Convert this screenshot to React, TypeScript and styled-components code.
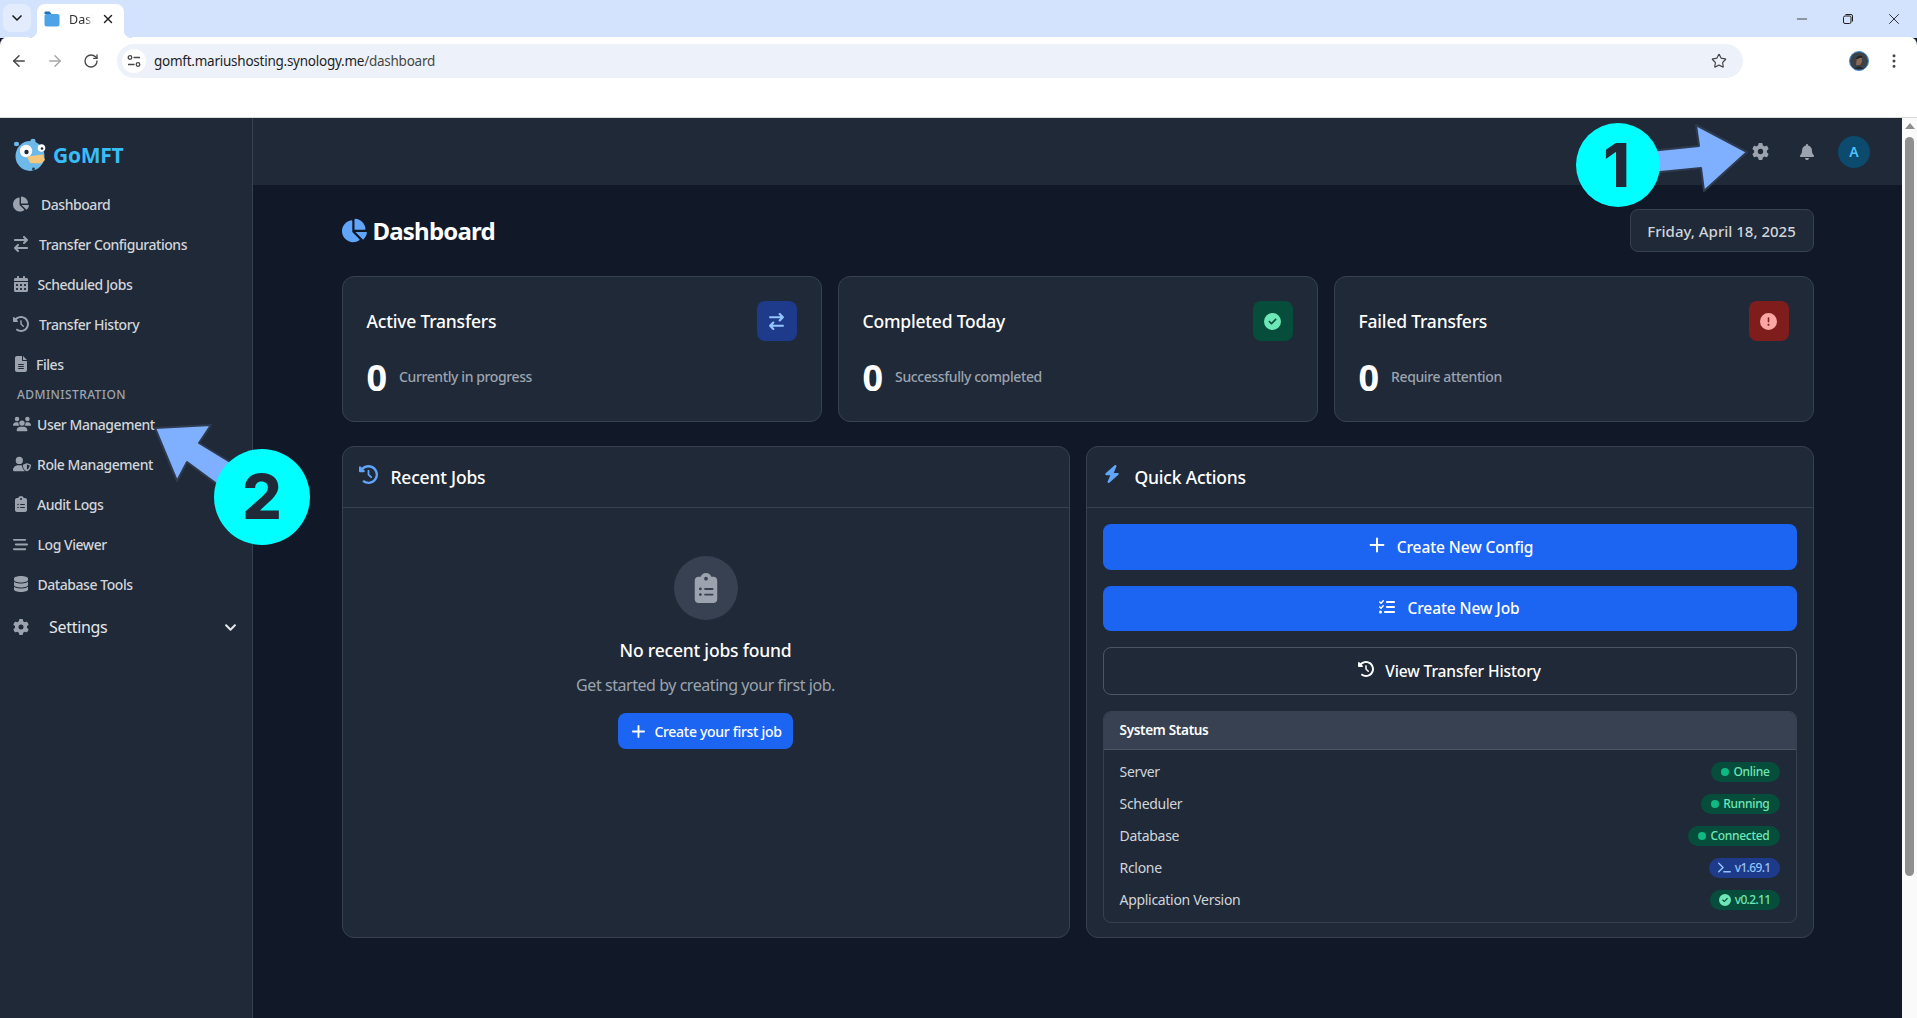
import React from 'react'

import { ArrowLeft, ArrowRight, ChevronDown, EllipsisVertical, Minus, Plus, RotateCw, Star, X } from 'lucide-react'
import { FaChartPie, FaChevronDown } from 'react-icons/fa'
import {
  FaArrowRightArrowLeft,
  FaBarsStaggered,
  FaBell,
  FaBolt,
  FaCalendarDays,
  FaCircleCheck,
  FaCircleExclamation,
  FaClipboardList,
  FaClockRotateLeft,
  FaDatabase,
  FaFileLines,
  FaGear,
  FaListCheck,
  FaTerminal,
  FaUsers,
  FaUserShield,
} from 'react-icons/fa6'
import styled, { createGlobalStyle } from 'styled-components'

const GlobalStyle = createGlobalStyle`
  html, body {
    margin: 0;
    padding: 0;
    height: 100%;
    overflow: hidden;
    background: #111827;
  }
  * {
    box-sizing: border-box;
  }
  body {
    font-family: "Noto Sans", "Open Sans", "Liberation Sans", sans-serif;
  }
`

const Page = styled.div`
  position: relative;
  width: 1917px;
  height: 1018px;
  overflow: hidden;
  display: flex;
  flex-direction: column;
`

/* browser chrome */
const TabStrip = styled.div`
  height: 38px;
  background: #d3e3fd;
  display: flex;
  align-items: flex-end;
  padding-left: 3px;
  color: #1f1f1f;
`

const TabMenu = styled.div`
  width: 28px;
  height: 28px;
  margin-bottom: 6px;
  border-radius: 8px;
  background: #e2ecfd;
  display: flex;
  align-items: center;
  justify-content: center;
`

const Tab = styled.div`
  position: relative;
  width: 87px;
  height: 34px;
  margin-left: 6px;
  padding: 0 8px 4px 7px;
  background: #fff;
  border-radius: 8px 8px 0 0;
  display: flex;
  align-items: center;
  font-size: 12.5px;
  &::before,
  &::after {
    content: '';
    position: absolute;
    bottom: 0;
    width: 8px;
    height: 8px;
  }
  &::before {
    left: -8px;
    background: radial-gradient(circle at 0 0, #d3e3fd 8px, #fff 8.5px);
  }
  &::after {
    right: -8px;
    background: radial-gradient(circle at 100% 0, #d3e3fd 8px, #fff 8.5px);
  }
`

const TabTitle = styled.span`
  margin-left: 9px;
  width: 24px;
  overflow: hidden;
  white-space: nowrap;
  color: #333;
  mask-image: linear-gradient(to right, #000 70%, transparent);
`

const TabClose = styled.span`
  margin-left: auto;
  margin-right: 1px;
  display: flex;
`

const WindowControls = styled.div`
  margin-left: auto;
  height: 38px;
  display: flex;
  align-items: center;
`

const WindowButton = styled.span`
  width: 46px;
  display: flex;
  justify-content: center;
`

const Toolbar = styled.div`
  height: 81px;
  flex: none;
  background: #fff;
  border-radius: 8px 8px 0 0;
  margin-top: -1px;
  border-bottom: 1px solid #d9d9d9;
  display: flex;
  align-items: flex-start;
  padding: 7px 0 0 1px;
  color: #474747;
`

const NavButton = styled.div<{ $off?: boolean }>`
  width: 36px;
  height: 34px;
  display: flex;
  align-items: center;
  justify-content: center;
  color: ${p => (p.$off ? '#a8a8a8' : '#474747')};
`

const AddressBar = styled.div`
  margin-left: 8px;
  width: 1626px;
  flex: none;
  height: 34px;
  border-radius: 17px;
  background: #edf2fa;
  display: flex;
  align-items: center;
  padding: 0 16px 0 5px;
`

const SiteBadge = styled.div`
  width: 24px;
  height: 24px;
  border-radius: 50%;
  background: #fff;
  display: flex;
  align-items: center;
  justify-content: center;
`

const UrlText = styled.span`
  margin-left: 8px;
  font-size: 13.5px;
  letter-spacing: -0.25px;
  color: #1f1f1f;
  span {
    color: #474747;
  }
`

const StarSlot = styled.span`
  margin-left: auto;
  display: flex;
`

const Profile = styled.div`
  width: 20px;
  height: 20px;
  flex: none;
  margin: 7px 0 0 106px;
  display: flex;
`

const MenuDots = styled.div`
  margin: 8px 0 0 16px;
  display: flex;
`

/* app */
const AppBody = styled.div`
  flex: 1;
  display: flex;
  min-height: 0;
`

const Sidebar = styled.aside`
  width: 253px;
  flex: none;
  background: #1f2937;
  border-right: 1px solid #374151;
  padding-left: 13px;
`

const Brand = styled.div`
  height: 66px;
  display: flex;
  align-items: center;
  gap: 6px;
  padding-top: 8px;
`

const BrandName = styled.span`
  font-size: 21px;
  font-weight: 700;
  letter-spacing: -0.3px;
  color: #38bdf8;
`

const NavItem = styled.div`
  height: 40px;
  display: flex;
  align-items: center;
  font-size: 14px;
  font-weight: 500;
  letter-spacing: -0.45px;
  color: #d1d5db;
  svg {
    color: #9ca3af;
  }
`

const NavIcon = styled.span<{ $slot: number }>`
  display: flex;
  flex: none;
  width: ${p => p.$slot}px;
`

const SectionLabel = styled.div`
  height: 20px;
  padding: 1px 0 0 4px;
  display: flex;
  align-items: center;
  font-size: 12px;
  font-weight: 500;
  letter-spacing: 0.42px;
  color: #9ca3af;
`

const SettingsRow = styled.div`
  height: 40px;
  margin-top: 3px;
  padding-right: 15px;
  display: flex;
  align-items: center;
  font-size: 16px;
  letter-spacing: -0.3px;
  color: #e5e7eb;
  svg {
    color: #9ca3af;
  }
`

const SettingsLabel = styled.span`
  margin-left: 20px;
`

const SettingsChevron = styled.span`
  margin-left: auto;
  display: flex;
  svg {
    color: #e5e7eb;
  }
`

const Main = styled.main`
  flex: 1;
  min-width: 0;
  background: #111827;
`

const Topbar = styled.header`
  height: 67px;
  background: #1f2937;
  display: flex;
  align-items: center;
  justify-content: flex-end;
  padding-right: 32px;
  color: #9ca3af;
`

const TopIcon = styled.span<{ $gap: number }>`
  display: flex;
  margin-right: ${p => p.$gap}px;
`

const Avatar = styled.div`
  width: 32px;
  height: 32px;
  border-radius: 50%;
  background: #0c4a6e;
  color: #4fc3fa;
  font-size: 14px;
  font-weight: 600;
  display: flex;
  align-items: center;
  justify-content: center;
`

const Content = styled.div`
  width: 1472px;
  margin: 0 auto;
  padding-top: 24px;
  display: flex;
  flex-direction: column;
  gap: 24px;
`

const TitleRow = styled.div`
  height: 43px;
  display: flex;
  align-items: center;
  justify-content: space-between;
`

const PageTitle = styled.h1`
  margin: 0;
  display: flex;
  align-items: center;
  gap: 6px;
  font-size: 24px;
  font-weight: 700;
  letter-spacing: -0.8px;
  color: #fff;
  svg {
    color: #60a5fa;
  }
`

const DateBox = styled.div`
  width: 184px;
  height: 43px;
  border: 1px solid #374151;
  border-radius: 8px;
  background: #1f2937;
  display: flex;
  align-items: center;
  justify-content: center;
  font-size: 15px;
  font-weight: 500;
  color: #d1d5db;
`

const StatGrid = styled.div`
  display: grid;
  grid-template-columns: repeat(3, 1fr);
  gap: 16px;
`

const StatCard = styled.section`
  height: 146px;
  padding: 24px;
  border: 1px solid #374151;
  border-radius: 12px;
  background: #1f2937;
`

const StatHead = styled.div`
  height: 40px;
  display: flex;
  align-items: center;
  justify-content: space-between;
`

const StatTitle = styled.h3`
  margin: 0;
  font-size: 17.5px;
  font-weight: 500;
  letter-spacing: -0.2px;
  color: #fff;
`

const StatIcon = styled.div<{ $bg: string; $fg: string }>`
  width: 40px;
  height: 40px;
  border-radius: 8px;
  display: flex;
  align-items: center;
  justify-content: center;
  background: ${p => p.$bg};
  color: ${p => p.$fg};
`

const StatBody = styled.div`
  margin-top: 16px;
  height: 40px;
  display: flex;
  align-items: center;
  gap: 12px;
`

const StatValue = styled.span`
  font-size: 36px;
  font-weight: 700;
  color: #fff;
`

const StatNote = styled.span`
  margin-bottom: 2px;
  font-size: 14px;
  font-weight: 500;
  letter-spacing: -0.4px;
  color: #9ca3af;
`

const PanelGrid = styled.div`
  display: grid;
  grid-template-columns: 728px 728px;
  gap: 16px;
`

const Panel = styled.section`
  height: 492px;
  border: 1px solid #374151;
  border-radius: 12px;
  background: #1f2937;
`

const PanelHead = styled.div`
  height: 61px;
  padding: 18px 16px 0;
  border-bottom: 1px solid #374151;
  display: flex;
  align-items: flex-start;
  color: #60a5fa;
`

const PanelTitle = styled.h3<{ $gap: number }>`
  margin: -1px 0 0;
  font-size: 17.5px;
  font-weight: 500;
  letter-spacing: -0.2px;
  color: #fff;
  line-height: 26px;
  margin-left: ${p => p.$gap}px;
`

const EmptyState = styled.div`
  padding-top: 48px;
  display: flex;
  flex-direction: column;
  align-items: center;
`

const EmptyCircle = styled.div`
  width: 64px;
  height: 64px;
  border-radius: 50%;
  background: #374151;
  display: flex;
  align-items: center;
  justify-content: center;
  color: #9ca3af;
`

const EmptyTitle = styled.h3`
  margin: 17px 0 0;
  font-size: 17.5px;
  line-height: 26px;
  font-weight: 500;
  letter-spacing: -0.2px;
  color: #fff;
`

const EmptyText = styled.p`
  margin: 10px 0 0;
  font-size: 16px;
  line-height: 24px;
  letter-spacing: -0.45px;
  color: #9ca3af;
`

const SmallButton = styled.button`
  margin-top: 16px;
  width: 175px;
  height: 36px;
  border: 0;
  border-radius: 8px;
  background: #1c64f2;
  color: #fff;
  font-family: inherit;
  font-size: 14px;
  font-weight: 500;
  letter-spacing: -0.3px;
  display: flex;
  align-items: center;
  justify-content: center;
  gap: 6px;
`

const ActionList = styled.div`
  padding: 16px;
  display: flex;
  flex-direction: column;
  gap: 16px;
`

const ActionButton = styled.button<{ $outline?: boolean; $gap: number }>`
  width: 100%;
  height: ${p => (p.$outline ? 47.5 : 45.5)}px;
  border: ${p => (p.$outline ? '1px solid #4b5563' : '0')};
  border-radius: 8px;
  background: ${p => (p.$outline ? 'transparent' : '#1c64f2')};
  color: #fff;
  font-family: inherit;
  font-size: 15.5px;
  font-weight: 500;
  letter-spacing: -0.1px;
  display: flex;
  align-items: center;
  justify-content: center;
  gap: ${p => p.$gap}px;
  svg {
    margin-bottom: 3px;
  }
`

const StatusBox = styled.div`
  border: 1px solid #374151;
  border-radius: 8px;
  overflow: hidden;
`

const StatusHead = styled.div`
  height: 38px;
  padding: 0 16px 1px;
  background: #374151;
  border-bottom: 1px solid #4b5563;
  display: flex;
  align-items: center;
  font-size: 13.5px;
  font-weight: 600;
  letter-spacing: -0.3px;
  color: #fff;
`

const StatusRows = styled.div`
  padding: 12px 16px;
  display: flex;
  flex-direction: column;
  gap: 12px;
`

const StatusRow = styled.div`
  height: 20px;
  display: flex;
  align-items: center;
  justify-content: space-between;
  font-size: 14px;
  letter-spacing: -0.3px;
  color: #d1d5db;
`

const Badge = styled.span<{ $blue?: boolean; $tight?: boolean }>`
  height: 20px;
  padding: 0 ${p => (p.$tight ? 9 : 10)}px;
  border-radius: 10px;
  display: inline-flex;
  align-items: center;
  gap: 4px;
  font-size: 12px;
  font-weight: 500;
  letter-spacing: ${p => (p.$tight ? -0.65 : -0.3)}px;
  background: ${p => (p.$blue ? '#1e3a8a' : '#064e3b')};
  color: ${p => (p.$blue ? '#93c5fd' : '#6ee7b7')};
`

const BadgeDot = styled.span`
  width: 8px;
  height: 8px;
  border-radius: 50%;
  background: #10b981;
`

const Scrollbar = styled.div`
  width: 15px;
  flex: none;
  background: #fafafa;
  display: flex;
  flex-direction: column;
  align-items: center;
  padding-top: 5px;
`

const ScrollArrow = styled.div`
  width: 0;
  height: 0;
  border-left: 5px solid transparent;
  border-right: 5px solid transparent;
  border-bottom: 6px solid #8f8f8f;
`

const ScrollThumb = styled.div`
  width: 9px;
  height: 739px;
  margin-top: 8px;
  border-radius: 5px;
  background: #8f8f8f;
`

/* numbered call-outs drawn on top of the screenshot */
const Overlay = styled.svg`
  position: absolute;
  inset: 0;
  pointer-events: none;
`

const Marker = styled.div<{ $x: number; $y: number; $size: number; $font: number; $nudge: number }>`
  position: absolute;
  left: ${p => p.$x - p.$size / 2}px;
  top: ${p => p.$y - p.$size / 2}px;
  width: ${p => p.$size}px;
  height: ${p => p.$size}px;
  padding-right: ${p => p.$nudge}px;
  border-radius: 50%;
  background: #00ffff;
  color: #1f2937;
  display: flex;
  align-items: center;
  justify-content: center;
  font-family: Inter, "Noto Sans", sans-serif;
  font-size: ${p => p.$font}px;
  font-weight: 800;
  line-height: 1;
`

const Gopher = () => (
  <svg width="34" height="34" viewBox="0 0 34 34">
    <ellipse cx="3.5" cy="6" rx="2.6" ry="2.2" fill="#6db9ea" />
    <ellipse cx="20" cy="3" rx="2.6" ry="2.2" fill="#6db9ea" />
    <ellipse cx="17" cy="18" rx="14.5" ry="15" fill="#6db9ea" />
    <circle cx="13" cy="13" r="6.2" fill="#fff" />
    <circle cx="13.5" cy="14" r="2.2" fill="#1f2937" />
    <circle cx="28.5" cy="10" r="3.8" fill="#fff" />
    <circle cx="29" cy="10.5" r="1.3" fill="#1f2937" />
    <path d="M14 18.5 L30 16.5 L32 22 L28 25.5 L17 25 Z" fill="#f4c77b" />
    <circle cx="20.5" cy="31" r="1.4" fill="#27364a" />
  </svg>
)

const SiteTune = () => (
  <svg width="14" height="14" viewBox="0 0 14 14" fill="none" stroke="#474747" strokeWidth="1.3">
    <circle cx="3" cy="3.5" r="1.8" />
    <path d="M6.5 3.5H13M1 10.5h6.5" />
    <circle cx="11" cy="10.5" r="1.8" />
  </svg>
)

const FolderIcon = () => (
  <svg width="16" height="16" viewBox="0 0 16 16">
    <path d="M0.5 1.5a1 1 0 0 1 1-1h4l2 2.5h-7z" fill="#1d6fb8" />
    <rect x="0.5" y="3" width="15" height="12.5" rx="2" fill="#4da3e8" />
  </svg>
)

const RestoreIcon = () => (
  <svg width="12" height="12" viewBox="0 0 12 12" fill="none" stroke="#1f1f1f" strokeWidth="1">
    <rect x="1.5" y="3" width="7.5" height="7.5" rx="1.5" />
    <path d="M3.5 1.5h5.5a1.5 1.5 0 0 1 1.5 1.5v5.5" />
  </svg>
)

const ProfilePhoto = () => (
  <svg width="20" height="20" viewBox="0 0 20 20">
    <circle cx="10" cy="10" r="9.5" fill="#3c4148" stroke="#4a90d9" />
    <path d="M7 14 L8 6 Q10 4 13 6 L13 11 L11 14 Z" fill="#8a6a55" />
    <path d="M7 8 Q8 3.5 13 5 L13 7 Q10 6 9 8 Z" fill="#26221f" />
    <path d="M5 18 Q10 13 15 18 Z" fill="#23262b" />
  </svg>
)

type Nav = { label: string; icon: React.ElementType; size: number; slot: number }

const navTop: Nav[] = [
  { label: 'Dashboard', icon: FaChartPie, size: 16, slot: 28 },
  { label: 'Transfer Configurations', icon: FaArrowRightArrowLeft, size: 16, slot: 26 },
  { label: 'Scheduled Jobs', icon: FaCalendarDays, size: 16, slot: 24.5 },
  { label: 'Transfer History', icon: FaClockRotateLeft, size: 16, slot: 26 },
  { label: 'Files', icon: FaFileLines, size: 16, slot: 23 },
]

const navAdmin: Nav[] = [
  { label: 'User Management', icon: FaUsers, size: 18, slot: 24 },
  { label: 'Role Management', icon: FaUserShield, size: 18, slot: 24 },
  { label: 'Audit Logs', icon: FaClipboardList, size: 16, slot: 24 },
  { label: 'Log Viewer', icon: FaBarsStaggered, size: 15, slot: 24.5 },
  { label: 'Database Tools', icon: FaDatabase, size: 16, slot: 24.5 },
]

const stats = [
  { title: 'Active Transfers', note: 'Currently in progress', icon: FaArrowRightArrowLeft, bg: '#1e3a8a', fg: '#93c5fd' },
  { title: 'Completed Today', note: 'Successfully completed', icon: FaCircleCheck, bg: '#064e3b', fg: '#6ee7b7' },
  { title: 'Failed Transfers', note: 'Require attention', icon: FaCircleExclamation, bg: '#7f1d1d', fg: '#fca5a5' },
]

const NavRow = ({ item }: { item: Nav }) => {
  const Icon = item.icon
  return (
    <NavItem>
      <NavIcon $slot={item.slot}>
        <Icon size={item.size} />
      </NavIcon>
      {item.label}
    </NavItem>
  )
}

export default function App() {
  return (
    <Page>
      <GlobalStyle />
      <TabStrip>
        <TabMenu>
          <ChevronDown size={16} strokeWidth={2.5} />
        </TabMenu>
        <Tab>
          <FolderIcon />
          <TabTitle>Dashboard</TabTitle>
          <TabClose>
            <X size={14} strokeWidth={2.5} />
          </TabClose>
        </Tab>
        <WindowControls>
          <WindowButton>
            <Minus size={16} strokeWidth={1.2} />
          </WindowButton>
          <WindowButton>
            <RestoreIcon />
          </WindowButton>
          <WindowButton>
            <X size={18} strokeWidth={1.2} />
          </WindowButton>
        </WindowControls>
      </TabStrip>
      <Toolbar>
        <NavButton>
          <ArrowLeft size={18} />
        </NavButton>
        <NavButton $off>
          <ArrowRight size={18} />
        </NavButton>
        <NavButton>
          <RotateCw size={16} />
        </NavButton>
        <AddressBar>
          <SiteBadge>
            <SiteTune />
          </SiteBadge>
          <UrlText>
            gomft.mariushosting.synology.me<span>/dashboard</span>
          </UrlText>
          <StarSlot>
            <Star size={16} strokeWidth={1.8} />
          </StarSlot>
        </AddressBar>
        <Profile>
          <ProfilePhoto />
        </Profile>
        <MenuDots>
          <EllipsisVertical size={18} />
        </MenuDots>
      </Toolbar>

      <AppBody>
        <Sidebar>
          <Brand>
            <Gopher />
            <BrandName>GoMFT</BrandName>
          </Brand>
          {navTop.map(item => (
            <NavRow key={item.label} item={item} />
          ))}
          <SectionLabel>ADMINISTRATION</SectionLabel>
          {navAdmin.map(item => (
            <NavRow key={item.label} item={item} />
          ))}
          <SettingsRow>
            <FaGear size={16} />
            <SettingsLabel>Settings</SettingsLabel>
            <SettingsChevron>
              <FaChevronDown size={13} />
            </SettingsChevron>
          </SettingsRow>
        </Sidebar>

        <Main>
          <Topbar>
            <TopIcon $gap={30}>
              <FaGear size={17} />
            </TopIcon>
            <TopIcon $gap={23}>
              <FaBell size={16} />
            </TopIcon>
            <Avatar>A</Avatar>
          </Topbar>
          <Content>
            <TitleRow>
              <PageTitle>
                <FaChartPie size={25} />
                Dashboard
              </PageTitle>
              <DateBox>Friday, April 18, 2025</DateBox>
            </TitleRow>

            <StatGrid>
              {stats.map(s => {
                const Icon = s.icon
                return (
                  <StatCard key={s.title}>
                    <StatHead>
                      <StatTitle>{s.title}</StatTitle>
                      <StatIcon $bg={s.bg} $fg={s.fg}>
                        <Icon size={17} />
                      </StatIcon>
                    </StatHead>
                    <StatBody>
                      <StatValue>0</StatValue>
                      <StatNote>{s.note}</StatNote>
                    </StatBody>
                  </StatCard>
                )
              })}
            </StatGrid>

            <PanelGrid>
              <Panel>
                <PanelHead>
                  <FaClockRotateLeft size={19} />
                  <PanelTitle $gap={13}>Recent Jobs</PanelTitle>
                </PanelHead>
                <EmptyState>
                  <EmptyCircle>
                    <FaClipboardList size={30} />
                  </EmptyCircle>
                  <EmptyTitle>No recent jobs found</EmptyTitle>
                  <EmptyText>Get started by creating your first job.</EmptyText>
                  <SmallButton>
                    <Plus size={19} strokeWidth={2.4} />
                    Create your first job
                  </SmallButton>
                </EmptyState>
              </Panel>

              <Panel>
                <PanelHead>
                  <FaBolt size={18} />
                  <PanelTitle $gap={14}>Quick Actions</PanelTitle>
                </PanelHead>
                <ActionList>
                  <ActionButton $gap={9}>
                    <Plus size={22} strokeWidth={2.2} />
                    Create New Config
                  </ActionButton>
                  <ActionButton $gap={12}>
                    <FaListCheck size={16} />
                    Create New Job
                  </ActionButton>
                  <ActionButton $outline $gap={11}>
                    <FaClockRotateLeft size={16} />
                    View Transfer History
                  </ActionButton>
                  <StatusBox>
                    <StatusHead>System Status</StatusHead>
                    <StatusRows>
                      <StatusRow>
                        Server
                        <Badge>
                          <BadgeDot />
                          Online
                        </Badge>
                      </StatusRow>
                      <StatusRow>
                        Scheduler
                        <Badge>
                          <BadgeDot />
                          Running
                        </Badge>
                      </StatusRow>
                      <StatusRow>
                        Database
                        <Badge>
                          <BadgeDot />
                          Connected
                        </Badge>
                      </StatusRow>
                      <StatusRow>
                        Rclone
                        <Badge $blue $tight>
                          <FaTerminal size={13} />
                          v1.69.1
                        </Badge>
                      </StatusRow>
                      <StatusRow>
                        Application Version
                        <Badge $tight>
                          <FaCircleCheck size={12} />
                          v0.2.11
                        </Badge>
                      </StatusRow>
                    </StatusRows>
                  </StatusBox>
                </ActionList>
              </Panel>
            </PanelGrid>
          </Content>
        </Main>

        <Scrollbar>
          <ScrollArrow />
          <ScrollThumb />
        </Scrollbar>
      </AppBody>

      <Overlay width="1917" height="1018" viewBox="0 0 1917 1018">
        <path
          d="M1747 152 L1696 125 L1699 146 L1640 152 L1640 174 L1701 168 L1704 191 Z"
          fill="#7fb0ff"
          stroke="#2f3a4f"
          strokeWidth="2"
          strokeLinejoin="round"
        />
        <path
          d="M155 428 L211 425 L199 443 L240 468 L225 490 L187 462 L177 481 Z"
          fill="#7fb0ff"
          stroke="#2f3a4f"
          strokeWidth="2"
          strokeLinejoin="round"
        />
      </Overlay>
      <Marker $x={1618} $y={165} $size={84} $font={60} $nudge={3}>
        1
      </Marker>
      <Marker $x={262} $y={497} $size={96} $font={62} $nudge={0}>
        2
      </Marker>
    </Page>
  )
}
